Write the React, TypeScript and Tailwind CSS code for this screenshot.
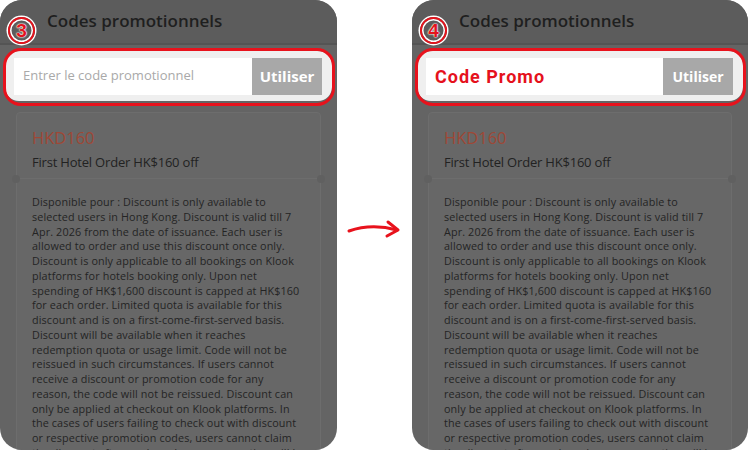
import React from "react";

const lines = [
  "Disponible pour : Discount is only available to",
  "selected users in Hong Kong. Discount is valid till 7",
  "Apr. 2026 from the date of issuance. Each user is",
  "allowed to order and use this discount once only.",
  "Discount is only applicable to all bookings on Klook",
  "platforms for hotels booking only. Upon net",
  "spending of HK$1,600 discount is capped at HK$160",
  "for each order. Limited quota is available for this",
  "discount and is on a first-come-first-served basis.",
  "Discount will be available when it reaches",
  "redemption quota or usage limit. Code will not be",
  "reissued in such circumstances. If users cannot",
  "receive a discount or promotion code for any",
  "reason, the code will not be reissued. Discount can",
  "only be applied at checkout on Klook platforms. In",
  "the cases of users failing to check out with discount",
  "or respective promotion codes, users cannot claim",
  "the discount afterwards and no compensation will be",
];

function Badge({ n }: { n: string }) {
  return (
    <div className="absolute left-[8px] top-[17px] w-[27px] h-[27px] rounded-full border-[2.5px] border-[#e3141d] shadow-[0_0_0_1.5px_#fff,inset_0_0_0_1.5px_#fff] flex items-center justify-center">
      <span
        className="text-[#e3141d] text-[19px] font-bold leading-none [text-shadow:0_0_1.5px_#fff,0_0_1.5px_#fff,0_0_1.5px_#fff]"
        style={{ fontFamily: "'Liberation Sans', Arial, sans-serif" }}
      >
        {n}
      </span>
    </div>
  );
}

function Panel({ badge, promo, width }: { badge: string; promo: boolean; width: string }) {
  return (
    <div className={`relative h-[450px] ${width} shrink-0 rounded-[22px] overflow-hidden bg-[#646464]`}>
      <div className="h-[45px] bg-[#5c5c5c] border-b-[2px] border-[#545454] flex items-center pl-[47px]">
        <span className="text-[17px] font-semibold text-[#1f1f1f] -mt-[2px]">
          Codes promotionnels
        </span>
      </div>
      <div className="mx-[5px] mt-[6px] h-[50px] rounded-[14px] bg-[#efefef] flex items-center px-[9px] pr-[10px]">
        <div className="flex-1 h-[37px] bg-white flex items-center pl-[9px]">
          {promo ? (
            <span
              className="text-[#e5111c] text-[18px] font-bold tracking-[1px]"
              style={{ fontFamily: "Roboto, 'Liberation Sans', sans-serif" }}
            >
              Code Promo
            </span>
          ) : (
            <span className="text-[#a9a9a9] text-[13px]">Entrer le code promotionnel</span>
          )}
        </div>
        <div className="w-[70px] h-[37px] bg-[#a8a8a8] flex items-center justify-center">
          <span className={`text-white font-bold ${promo ? "text-[14px]" : "text-[15px]"}`}>Utiliser</span>
        </div>
      </div>
      <div className="mx-[16px] mt-[11px] relative">
        <div className="h-[67px] bg-[#676767] border border-[#6d6d6d] rounded-t-[4px] pl-[15px] pt-[13px]">
          <div className="text-[16.5px] text-[#9e4836] leading-[24px]">HKD160</div>
          <div className="text-[13px] tracking-[-0.2px] text-[#222] leading-[22px] mt-[1px]">First Hotel Order HK$160 off</div>
        </div>
        <div className="absolute left-[-4px] top-[63px] w-[8px] h-[8px] rounded-full bg-[#606060]" />
        <div className="absolute right-[-4px] top-[63px] w-[8px] h-[8px] rounded-full bg-[#606060]" />
        <div className="bg-[#676767] border-x border-[#6d6d6d] pl-[15px] pt-[16px] h-[300px]">
          {lines.map((l, i) => (
            <div key={i} className="whitespace-nowrap text-[10.8px] tracking-[0.12px] leading-[14.75px] text-[#242424]">
              {l}
            </div>
          ))}
        </div>
      </div>
      <Badge n={badge} />
      <div className="absolute left-[3px] right-[2px] top-[48px] h-[58px] rounded-[18px] border-[3px] border-[#e8121c]" />
    </div>
  );
}

export default function App() {
  return (
    <div
      className="w-[750px] h-[450px] bg-white flex overflow-hidden"
      style={{ fontFamily: "'Open Sans', sans-serif" }}
    >
      <Panel badge="3" promo={false} width="w-[337px]" />
      <div className="w-[75px] shrink-0 flex items-center justify-center">
        <svg width="60" height="30" viewBox="0 0 60 30" className="mt-[4px] -ml-[4px]">
          <path d="M6 19 C 20 14, 36 13, 54 18" stroke="#e8121c" strokeWidth="3" fill="none" strokeLinecap="round" />
          <path d="M45 10 L 55 18 L 44 24" stroke="#e8121c" strokeWidth="3" fill="none" strokeLinecap="round" strokeLinejoin="round" />
        </svg>
      </div>
      <Panel badge="4" promo={true} width="w-[336px]" />
    </div>
  );
}
